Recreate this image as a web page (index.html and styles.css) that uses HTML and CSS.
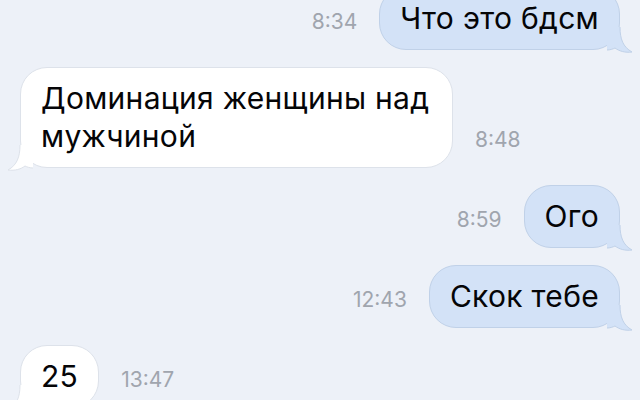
FILE: index.html
```html
<!DOCTYPE html>
<html>
<head>
  <title>Чат</title>
  <link rel="stylesheet" href="styles.css">
</head>
<body>
  <div class="chat">
    <div class="row out">
      <span class="time">8:34</span>
      <div class="bubble">Что это бдсм
        <svg class="tail" viewBox="0 0 26 26"><path class="fill" d="M0 0H13C13 12 16 20 25 25C18 26 12 24 8 21C6 22 3 23 0 23Z"/><path class="edge" d="M13 0C13 12 16 20 25 25C18 26 12 24 8 21C6 22 3 23 0 23"/></svg>
      </div>
    </div>

    <div class="row in">
      <div class="bubble wide">Доминация женщины над мужчиной
        <svg class="tail" viewBox="0 0 26 26"><path class="fill" d="M0 0H13C13 12 16 20 25 25C18 26 12 24 8 21C6 22 3 23 0 23Z"/><path class="edge" d="M13 0C13 12 16 20 25 25C18 26 12 24 8 21C6 22 3 23 0 23"/></svg>
      </div>
      <span class="time">8:48</span>
    </div>

    <div class="row out">
      <span class="time">8:59</span>
      <div class="bubble">Ого
        <svg class="tail" viewBox="0 0 26 26"><path class="fill" d="M0 0H13C13 12 16 20 25 25C18 26 12 24 8 21C6 22 3 23 0 23Z"/><path class="edge" d="M13 0C13 12 16 20 25 25C18 26 12 24 8 21C6 22 3 23 0 23"/></svg>
      </div>
    </div>

    <div class="row out">
      <span class="time">12:43</span>
      <div class="bubble">Скок тебе
        <svg class="tail" viewBox="0 0 26 26"><path class="fill" d="M0 0H13C13 12 16 20 25 25C18 26 12 24 8 21C6 22 3 23 0 23Z"/><path class="edge" d="M13 0C13 12 16 20 25 25C18 26 12 24 8 21C6 22 3 23 0 23"/></svg>
      </div>
    </div>

    <div class="row in">
      <div class="bubble">25
        <svg class="tail" viewBox="0 0 26 26"><path class="fill" d="M0 0H13C13 12 16 20 25 25C18 26 12 24 8 21C6 22 3 23 0 23Z"/><path class="edge" d="M13 0C13 12 16 20 25 25C18 26 12 24 8 21C6 22 3 23 0 23"/></svg>
      </div>
      <span class="time">13:47</span>
    </div>
  </div>
</body>
</html>
```

FILE: styles.css
```css
html, body {
  margin: 0;
  height: 100%;
  overflow: hidden;
  background: #edf1f8;
}
body {
  font-family: Inter, "Noto Sans", Arial, sans-serif;
  color: #050507;
}
.chat {
  display: flex;
  flex-direction: column;
  gap: 17px;
  margin-top: -13px;
  padding: 0 20px;
}
.row {
  display: flex;
  align-items: flex-end;
  gap: 22px;
}
.row.out {
  justify-content: flex-end;
}
.time {
  font-size: 21px;
  line-height: 24px;
  color: #a0a5ae;
  margin-bottom: 16px;
}
.bubble {
  position: relative;
  box-sizing: border-box;
  padding: 11px 20px 12px;
  font-size: 30px;
  line-height: 38px;
  letter-spacing: 0.3px;
  border-radius: 27px;
}
.out .bubble {
  background: #d3e2f7;
  border: 1px solid #c0d1e8;
}
.in .bubble {
  background: #fff;
  border: 1px solid #dde2ea;
}
.bubble.wide {
  max-width: 433px;
}
.tail {
  position: absolute;
  bottom: -4px;
  width: 26px;
  height: 26px;
  overflow: visible;
}
.out .tail {
  right: -14px;
}
.in .tail {
  left: -14px;
  transform: scaleX(-1);
}
.tail .edge {
  fill: none;
  stroke-width: 1;
}
.out .tail .fill {
  fill: #d3e2f7;
}
.out .tail .edge {
  stroke: #c0d1e8;
}
.in .tail .fill {
  fill: #fff;
}
.in .tail .edge {
  stroke: #dde2ea;
}
```
